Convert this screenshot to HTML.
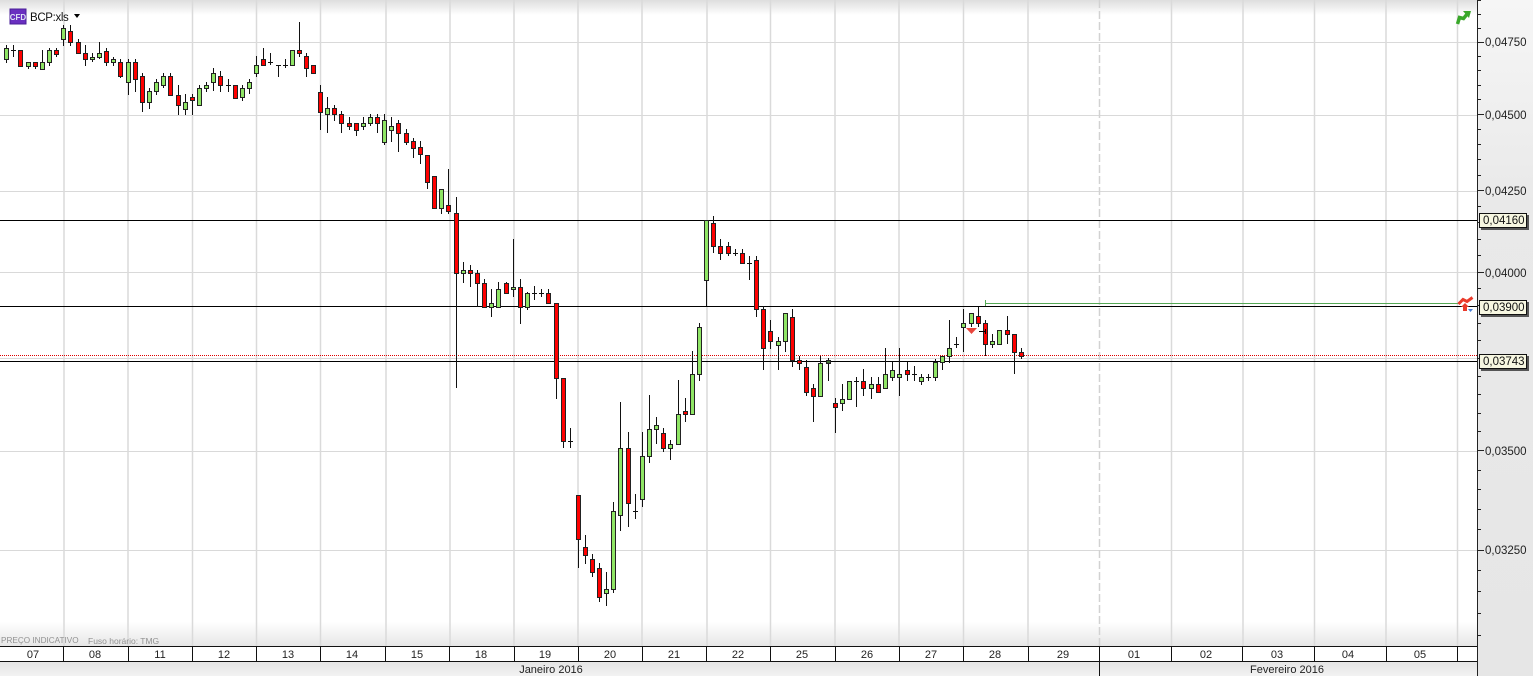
<!DOCTYPE html>
<html>
<head>
<meta charset="utf-8">
<style>
html,body{margin:0;padding:0;background:#fff}
#r{position:relative;width:1533px;height:676px;overflow:hidden;font-family:"Liberation Sans",sans-serif;color:#111}
#r div{position:absolute}
.bg{left:0;top:0}
svg{position:absolute;left:0;top:0}
.d{top:648px;height:14px;line-height:14px;font-size:11px;width:40px;text-align:center;color:#222}
.m{top:663px;height:14px;line-height:14px;font-size:11px;text-align:center;color:#222}
.p{left:1485px;font-size:11.5px;height:14px;line-height:14px;color:#222;white-space:nowrap}
.b{left:1479px;width:43px;height:13px;line-height:15px;font-size:11.5px;background:#f7f7e1;border:1px solid #111;box-shadow:2px 2px 0 #555;padding-left:3px;color:#111;white-space:nowrap}
</style>
</head>
<body>
<div id="r">
<div style="left:0;top:0;width:1477px;height:15px;background:linear-gradient(#dedede,#fff)"></div>
<div style="left:0;top:622px;width:1477px;height:24px;background:linear-gradient(#fff,#e6e6e6)"></div>
<div style="left:0;top:661px;width:1477px;height:15px;background:linear-gradient(#e4e4e4,#f2f2f2)"></div>
<div style="left:1477px;top:0;width:56px;height:676px;background:linear-gradient(#f6f6f6,#e9e9e9 30%,#e6e6e6)"></div>
<svg width="1533" height="676" viewBox="0 0 1533 676">
<g fill="none">
<path stroke="#d9d9d9" d="M0 42.5H1477M0 115.5H1477M0 191.5H1477M0 272.5H1477M0 358.5H1477M0 451.5H1477M0 550.5H1477"/>
<path stroke="#dadada" stroke-width="1.5" d="M64 0V646M128 0V646M192.500 0V646M256.500 0V646M320.500 0V646M386 0V646M450 0V646M514 0V646M578 0V646M642 0V646M707 0V646M770.500 0V646M835 0V646M899 0V646M963.500 0V646M1028 0V646M1171.500 0V646M1243 0V646M1314.500 0V646M1386 0V646M1457.500 0V646"/>
<path stroke="#d2d2d2" stroke-width="1.5" stroke-dasharray="8 3" d="M1099.500 0V646"/>
<path stroke="#000" d="M0 220.500H1477M0 306.500H1477M0 361.500H1477"/>
<path stroke="#d00" stroke-dasharray="1 1" d="M0 355.500H1477"/>
<path stroke="#111" d="M6.500 45V63M13.500 45V57M11 50.500h5M28.500 62V69M35.500 62V69M42.500 50V69M49.500 48V66M56.500 48V57M63.500 25V46M70.500 25V46M78.500 39V53M85.500 45V66M92.500 53V62M99.500 42V59M106.500 48V66M113.500 57V66M120.500 59V78M128.500 59V95M135.500 59V92M142.500 73V112M149.500 88V109M156.500 79V95M163.500 73V88M170.500 73V95M178.500 85V115M185.500 94V115M192.500 94V115M199.500 85V105M206.500 82V92M213.500 68V91M220.500 71V92M228.500 79V92M226 85.500h5M242.500 85V101M249.500 79V94M256.500 56V77M263.500 48V65M270.500 53V65M268 62.500h5M278.500 65V77M276 65.500h5M285.500 59V68M283 65.500h5M299.500 22V57M306.500 53V77M320.500 85V130M327.500 97V133M334.500 105V121M341.500 111V133M349.500 117V130M356.500 123V136M363.500 117V130M370.500 114V126M377.500 114V133M384.500 114V145M391.500 117V142M398.500 120V152M406.500 129V145M413.500 138V158M420.500 141V164M427.500 155V189M441.500 189V214M448.500 169V214M456.500 197V388M463.500 262V283M470.500 265V287M477.500 270V307M484.500 279V307M491.500 289V317M498.500 282V307M506.500 282V293M513.500 239V297M520.500 279V324M527.500 292V310M534.500 286V300M532 293.500h5M541.500 289V297M539 293.500h5M548.500 289V303M556.500 303V399M563.500 378V448M570.500 428V448M568 441.500h5M578.500 495V568M585.500 535V564M592.500 554V577M599.500 563V602M606.500 572V606M613.500 502V593M620.500 402V531M628.500 432V527M635.500 494V519M633 511.500h5M642.500 432V507M649.500 395V463M656.500 417V444M663.500 428V452M670.500 440V460M678.500 380V444M685.500 398V422M692.500 351V414M699.500 323V381M706.500 220V306M713.500 216V253M720.500 239V260M728.500 242V256M735.500 249V256M733 253.500h5M742.500 249V263M749.500 256V280M747 263.500h5M756.500 256V317M763.500 306V370M770.500 320V349M778.500 337V370M785.500 313V352M792.500 309V367M799.500 356V370M806.500 360V396M813.500 384V422M820.500 356V396M828.500 358V381M835.500 398V433M842.500 384V411M849.500 381V399M856.500 377V407M854 381.500h5M863.500 369V396M871.500 377V399M878.500 377V392M885.500 348V388M892.500 362V381M899.500 348V396M907.500 362V381M914.500 366V381M912 374.500h5M921.500 374V385M928.500 374V381M926 377.500h5M935.500 359V381M942.500 356V370M949.500 320V363M956.500 337V348M954 344.500h5M963.500 309V352M971.500 323V327M978.500 307V327M985.500 320V356M992.500 334V348M1007.500 316V344M1014.500 334V374M1021.500 348V359"/>
<path fill="#8fe565" stroke="#222" d="M4.500 48.500h4v11h-4zM26.500 62.500h4v4h-4zM40.500 62.500h4v7h-4zM47.500 50.500h4v12h-4zM61.500 28.500h4v11h-4zM90.500 57.500h4v2h-4zM97.500 53.500h4v4h-4zM111.500 59.500h4v3h-4zM126.500 62.500h4v20h-4zM147.500 91.500h4v11h-4zM154.500 82.500h4v9h-4zM161.500 76.500h4v9h-4zM183.500 102.500h4v7h-4zM197.500 88.500h4v17h-4zM204.500 85.500h4v3h-4zM211.500 73.500h4v9h-4zM240.500 88.500h4v9h-4zM247.500 82.500h4v6h-4zM254.500 65.500h4v8h-4zM290.500 50.500h4v15h-4zM325.500 108.500h4v6h-4zM361.500 123.500h4v3h-4zM368.500 117.500h4v6h-4zM382.500 120.500h4v22h-4zM389.500 126.500h4v4h-4zM439.500 189.500h4v19h-4zM461.500 270.500h4v3h-4zM489.500 303.500h4v4h-4zM496.500 289.500h4v18h-4zM511.500 287.500h4v2h-4zM525.500 293.500h4v14h-4zM604.500 589.500h4v4h-4zM611.500 511.500h4v78h-4zM618.500 448.500h4v67h-4zM640.500 456.500h4v43h-4zM647.500 429.500h4v27h-4zM654.500 425.500h4v4h-4zM668.500 444.500h4v4h-4zM676.500 414.500h4v30h-4zM690.500 374.500h4v40h-4zM697.500 327.500h4v47h-4zM704.500 220.500h4v60h-4zM776.500 341.500h4v4h-4zM783.500 313.500h4v28h-4zM818.500 363.500h4v33h-4zM840.500 399.500h4v4h-4zM847.500 381.500h4v18h-4zM869.500 384.500h4v4h-4zM883.500 374.500h4v14h-4zM890.500 370.500h4v7h-4zM897.500 374.500h4v3h-4zM919.500 377.500h4v4h-4zM933.500 362.500h4v15h-4zM940.500 356.500h4v6h-4zM947.500 348.500h4v8h-4zM961.500 323.500h4v4h-4zM969.500 313.500h4v10h-4zM990.500 341.500h4v3h-4zM997.500 330.500h4v14h-4z"/>
<path fill="#3f6b35" stroke="#222" d="M826.500 360.500h4v3h-4z"/>
<path fill="#f00" stroke="#222" d="M18.500 50.500h4v16h-4zM33.500 62.500h4v4h-4zM54.500 50.500h4v4h-4zM68.500 31.500h4v11h-4zM76.500 42.500h4v11h-4zM83.500 53.500h4v6h-4zM104.500 51.500h4v11h-4zM118.500 62.500h4v14h-4zM133.500 62.500h4v17h-4zM140.500 76.500h4v26h-4zM168.500 76.500h4v19h-4zM176.500 95.500h4v10h-4zM190.500 97.500h4v3h-4zM218.500 76.500h4v9h-4zM233.500 85.500h4v13h-4zM261.500 59.500h4v6h-4zM297.500 50.500h4v3h-4zM304.500 56.500h4v12h-4zM311.500 65.500h4v8h-4zM318.500 92.500h4v20h-4zM332.500 108.500h4v6h-4zM339.500 114.500h4v9h-4zM347.500 123.500h4v3h-4zM354.500 123.500h4v7h-4zM375.500 117.500h4v6h-4zM396.500 123.500h4v10h-4zM404.500 133.500h4v9h-4zM411.500 141.500h4v7h-4zM418.500 147.500h4v7h-4zM425.500 155.500h4v27h-4zM432.500 176.500h4v32h-4zM446.500 205.500h4v6h-4zM454.500 213.500h4v60h-4zM468.500 270.500h4v3h-4zM475.500 273.500h4v10h-4zM482.500 283.500h4v24h-4zM504.500 283.500h4v10h-4zM518.500 287.500h4v20h-4zM546.500 293.500h4v10h-4zM554.500 303.500h4v75h-4zM561.500 378.500h4v63h-4zM576.500 495.500h4v44h-4zM583.500 547.500h4v8h-4zM590.500 559.500h4v13h-4zM597.500 568.500h4v29h-4zM626.500 448.500h4v55h-4zM661.500 433.500h4v15h-4zM683.500 411.500h4v3h-4zM711.500 223.500h4v23h-4zM718.500 246.500h4v7h-4zM726.500 246.500h4v7h-4zM740.500 253.500h4v10h-4zM754.500 260.500h4v49h-4zM761.500 309.500h4v39h-4zM768.500 331.500h4v10h-4zM790.500 317.500h4v43h-4zM797.500 360.500h4v3h-4zM804.500 367.500h4v25h-4zM811.500 388.500h4v8h-4zM833.500 403.500h4v4h-4zM861.500 381.500h4v7h-4zM876.500 384.500h4v8h-4zM905.500 370.500h4v4h-4zM976.500 316.500h4v7h-4zM983.500 323.500h4v21h-4zM1005.500 330.500h4v4h-4zM1012.500 334.500h4v18h-4zM1019.500 352.500h4v4h-4z"/>
<path stroke="#55a855" d="M985.500 300V306M985 303.500H1460"/>
<path fill="#e8453c" stroke="none" d="M966 328h11l-5.500 6z"/>
<path stroke="#000" d="M979 331.500h6M985.500 329v5"/>
<path stroke="#222" d="M1477.500 0V676M1477 0.500h4M1477 14.500h4M1477 28.500h4M1477 42.500h7M1477 56.500h4M1477 70.500h4M1477 85.500h4M1477 99.500h4M1477 114.500h7M1477 129.500h4M1477 144.500h4M1477 159.500h4M1477 175.500h4M1477 190.500h7M1477 206.500h4M1477 222.500h4M1477 239.500h4M1477 255.500h4M1477 272.500h7M1477 288.500h4M1477 305.500h4M1477 323.500h4M1477 340.500h4M1477 358.500h4M1477 376.500h4M1477 394.500h4M1477 413.500h4M1477 431.500h4M1477 450.500h7M1477 470.500h4M1477 489.500h4M1477 509.500h4M1477 529.500h4M1477 550.500h7M1477 570.500h4M1477 591.500h4M1477 613.500h4M1477 635.500h4"/>
<path fill="#fff" stroke="none" d="M0 647h1477v14H0z"/>
<path stroke="#111" d="M0 646.500H1477M0 661.500H1477M63.500 646V661M128.500 646V661M192.500 646V661M256.500 646V661M320.500 646V661M385.500 646V661M449.500 646V661M514.500 646V661M578.500 646V661M642.500 646V661M706.500 646V661M770.500 646V661M835.500 646V661M899.500 646V661M963.500 646V661M1028.500 646V661M1099.500 646V676M1171.500 646V661M1242.500 646V661M1314.500 646V661M1386.500 646V661M1457.500 646V661"/>
<path stroke="#3aa82a" stroke-width="3.5" stroke-linejoin="miter" d="M1457.500 24L1459.500 17.500L1463.500 18.500L1468 13"/>
<path fill="#3aa82a" stroke="none" d="M1463 11h8l-2 7z"/>
<path stroke="#ea3a2a" stroke-width="3" d="M1458.500 304L1463 299.500L1467 301.500L1472.500 297.500"/>
<path fill="#ea3a2a" stroke="none" d="M1465 303l4 4h-2v4h-4v-4h-2z"/>
<path fill="#4a7fd8" stroke="none" d="M1468 309h5l-2.500 3z"/>
<rect x="10" y="9" width="16" height="15" fill="#6a2fc0" stroke="#4a1f98"/>
<path fill="#000" stroke="none" d="M74 14h6l-3 4z"/>
</g>
<text x="18" y="20" text-anchor="middle" font-family="Liberation Sans" font-size="8" font-weight="bold" fill="#dfe3f5">CFD</text>
</svg>
<div style="left:30px;top:11px;font-size:11.5px;line-height:14px;color:#111;letter-spacing:-.35px">BCP:xls</div>
<div style="left:1px;top:636px;font-size:8.2px;line-height:10px;color:#929292;white-space:nowrap">PREÇO INDICATIVO</div>
<div style="left:88px;top:636px;font-size:8.5px;line-height:10px;color:#929292;white-space:nowrap">Fuso horário: TMG</div>
<div class="p" style="top:36px">0,04750</div>
<div class="p" style="top:109px">0,04500</div>
<div class="p" style="top:185px">0,04250</div>
<div class="p" style="top:267px">0,04000</div>
<div class="p" style="top:445px">0,03500</div>
<div class="p" style="top:544px">0,03250</div>
<div class="b" style="top:213px">0,04160</div>
<div class="b" style="top:300px">0,03900</div>
<div class="b" style="top:354px">0,03743</div>
<div class="d" style="left:13px">07</div>
<div class="d" style="left:75px">08</div>
<div class="d" style="left:140px">11</div>
<div class="d" style="left:204px">12</div>
<div class="d" style="left:268px">13</div>
<div class="d" style="left:332px">14</div>
<div class="d" style="left:397px">15</div>
<div class="d" style="left:461px">18</div>
<div class="d" style="left:525px">19</div>
<div class="d" style="left:590px">20</div>
<div class="d" style="left:654px">21</div>
<div class="d" style="left:718px">22</div>
<div class="d" style="left:782px">25</div>
<div class="d" style="left:847px">26</div>
<div class="d" style="left:911px">27</div>
<div class="d" style="left:975px">28</div>
<div class="d" style="left:1043px">29</div>
<div class="d" style="left:1114px">01</div>
<div class="d" style="left:1186px">02</div>
<div class="d" style="left:1257px">03</div>
<div class="d" style="left:1328px">04</div>
<div class="d" style="left:1400px">05</div>
<div class="m" style="left:451px;width:200px">Janeiro 2016</div>
<div class="m" style="left:1187px;width:200px">Fevereiro 2016</div>
</div>
</body>
</html>
